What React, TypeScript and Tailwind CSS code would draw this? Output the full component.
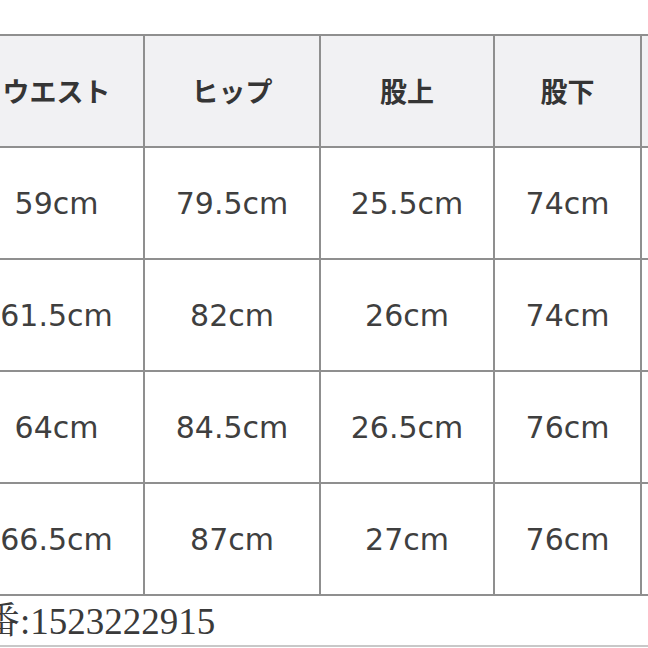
import React from "react";

const headers = ["ウエスト", "ヒップ", "股上", "股下", ""];
const rows = [
  ["59cm", "79.5cm", "25.5cm", "74cm", ""],
  ["61.5cm", "82cm", "26cm", "74cm", ""],
  ["64cm", "84.5cm", "26.5cm", "76cm", ""],
  ["66.5cm", "87cm", "27cm", "76cm", ""],
];

export default function App() {
  return (
    <div className="w-[648px] h-[648px] overflow-hidden bg-white relative">
      <div className="pt-[34px]">
        <div className="ml-[-30px] w-[720px] grid grid-cols-[173px_174px_172px_145px_50px] auto-rows-[110px] gap-[2px] bg-[#8f8f8f] border-y-2 border-[#8f8f8f]">
          {headers.map((h, i) => (
            <div
              key={"h" + i}
              className="bg-[#f1f1f3] flex items-center justify-center text-[27px] font-bold text-[#353535] [font-family:'Noto_Sans_CJK_JP',sans-serif]"
            >
              {h}
            </div>
          ))}
          {rows.map((r, ri) =>
            r.map((c, ci) => (
              <div
                key={ri + "-" + ci}
                className="bg-white flex items-center justify-center text-[30px] text-[#3f3f3f] [font-family:'DejaVu_Sans',sans-serif]"
              >
                {c}
              </div>
            ))
          )}
        </div>
      </div>
      <div className="mt-[5px] ml-[-17px] h-[40px] flex items-center text-[37px] leading-none text-[#3a3a3a] [font-family:'Liberation_Serif','Noto_Serif_CJK_JP','Noto_Sans_CJK_JP',serif]">
        番:1523222915
      </div>
      <div className="mt-[4px] h-[2px] bg-[#c8c8c8]" />
    </div>
  );
}
